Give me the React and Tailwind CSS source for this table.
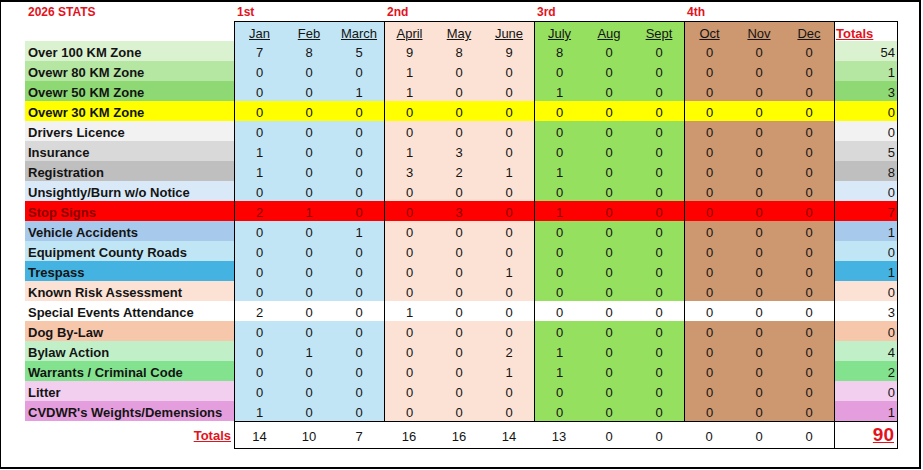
import React from "react";

const Q_BG = ["bg-[#C1E5F5]", "bg-[#FBE2D5]", "bg-[#96E060]", "bg-[#CD976F]"];
const MONTHS = ["Jan", "Feb", "March", "April", "May", "June", "July", "Aug", "Sept", "Oct", "Nov", "Dec"];

const ROWS = [
  { label: "Over 100 KM Zone", v: [7, 8, 5, 9, 8, 9, 8, 0, 0, 0, 0, 0], t: 54, bg: "bg-[#DAF2D0]" },
  { label: "Ovewr 80 KM Zone", v: [0, 0, 0, 1, 0, 0, 0, 0, 0, 0, 0, 0], t: 1, bg: "bg-[#B5E6A2]" },
  { label: "Ovewr 50 KM Zone", v: [0, 0, 1, 1, 0, 0, 1, 0, 0, 0, 0, 0], t: 3, bg: "bg-[#8ED973]" },
  { label: "Ovewr 30 KM Zone", v: [0, 0, 0, 0, 0, 0, 0, 0, 0, 0, 0, 0], t: 0, bg: "bg-[#FFFF00]", all: "bg-[#FFFF00]" },
  { label: "Drivers Licence", v: [0, 0, 0, 0, 0, 0, 0, 0, 0, 0, 0, 0], t: 0, bg: "bg-[#F2F2F2]" },
  { label: "Insurance", v: [1, 0, 0, 1, 3, 0, 0, 0, 0, 0, 0, 0], t: 5, bg: "bg-[#D9D9D9]" },
  { label: "Registration", v: [1, 0, 0, 3, 2, 1, 1, 0, 0, 0, 0, 0], t: 8, bg: "bg-[#BFBFBF]" },
  { label: "Unsightly/Burn w/o Notice", v: [0, 0, 0, 0, 0, 0, 0, 0, 0, 0, 0, 0], t: 0, bg: "bg-[#DAE9F8]" },
  { label: "Stop Signs", v: [2, 1, 0, 0, 3, 0, 1, 0, 0, 0, 0, 0], t: 7, bg: "bg-[#FF0000]", all: "bg-[#FF0000]", red: true },
  { label: "Vehicle Accidents", v: [0, 0, 1, 0, 0, 0, 0, 0, 0, 0, 0, 0], t: 1, bg: "bg-[#A6C9EC]" },
  { label: "Equipment County Roads", v: [0, 0, 0, 0, 0, 0, 0, 0, 0, 0, 0, 0], t: 0, bg: "bg-[#C0E6F5]" },
  { label: "Trespass", v: [0, 0, 0, 0, 0, 1, 0, 0, 0, 0, 0, 0], t: 1, bg: "bg-[#44B3E1]" },
  { label: "Known Risk Assessment", v: [0, 0, 0, 0, 0, 0, 0, 0, 0, 0, 0, 0], t: 0, bg: "bg-[#FBE2D5]" },
  { label: "Special Events Attendance", v: [2, 0, 0, 1, 0, 0, 0, 0, 0, 0, 0, 0], t: 3, bg: "bg-white", all: "bg-white" },
  { label: "Dog By-Law", v: [0, 0, 0, 0, 0, 0, 0, 0, 0, 0, 0, 0], t: 0, bg: "bg-[#F7C7AC]" },
  { label: "Bylaw Action", v: [0, 1, 0, 0, 0, 2, 1, 0, 0, 0, 0, 0], t: 4, bg: "bg-[#C1F0C8]" },
  { label: "Warrants / Criminal Code", v: [0, 0, 0, 0, 0, 1, 1, 0, 0, 0, 0, 0], t: 2, bg: "bg-[#83E28E]" },
  { label: "Litter", v: [0, 0, 0, 0, 0, 0, 0, 0, 0, 0, 0, 0], t: 0, bg: "bg-[#F2CEEF]" },
  { label: "CVDWR's Weights/Demensions", v: [1, 0, 0, 0, 0, 0, 0, 0, 0, 0, 0, 0], t: 1, bg: "bg-[#E59EDD]" },
];

const TOTALS = [14, 10, 7, 16, 16, 14, 13, 0, 0, 0, 0, 0];

function cellBorder(i) {
  return i % 3 === 0 ? "border-l border-black" : "";
}

export default function App() {
  return (
    <div className="w-[923px] h-[470px] bg-white font-['Liberation_Sans',Arial,sans-serif] text-[#141414]">
      <div className="w-[921px] h-[469px] border-t-2 border-r-2 border-b-2 border-l border-black pl-[24px]">
        {/* title row */}
        <div className="flex h-[19px] text-[12px] font-bold text-[#E3121C] leading-[17px] pt-[2px]">
          <div className="w-[209px] pl-[3px]">2026 STATS</div>
          {["1st", "2nd", "3rd", "4th"].map((q) => (
            <div key={q} className="w-[150px] pl-[3px]">{q}</div>
          ))}
        </div>

        {/* header row */}
        <div className="flex h-[20px] text-[13px]">
          <div className="w-[209px]" />
          {MONTHS.map((m, i) => (
            <div
              key={m}
              className={`w-[50px] h-[20px] border-t border-black ${cellBorder(i)} ${Q_BG[Math.floor(i / 3)]} text-center pt-[3px] leading-[17px]`}
            >
              <span className="underline">{m}</span>
            </div>
          ))}
          <div className="w-[64px] h-[20px] border-t border-l border-r border-black bg-white pl-[1px] pt-[3px] leading-[17px] font-bold text-[#E3121C]">
            <span className="underline">Totals</span>
          </div>
        </div>

        {/* data rows */}
        {ROWS.map((r) => (
          <div key={r.label} className={`flex h-[20px] text-[13px] ${r.red ? "text-[#8A0000]" : ""}`}>
            <div className={`w-[209px] h-[20px] ${r.bg} pl-[3px] pt-[3px] leading-[17px] font-bold whitespace-nowrap`}>
              {r.label}
            </div>
            {r.v.map((n, i) => (
              <div
                key={i}
                className={`w-[50px] h-[20px] ${cellBorder(i)} ${r.all ? r.all : Q_BG[Math.floor(i / 3)]} text-center pt-[3px] leading-[17px]`}
              >
                {n}
              </div>
            ))}
            <div className={`w-[64px] h-[20px] border-l border-r border-black ${r.bg} text-right pr-[2px] pt-[3px] leading-[17px]`}>
              {r.t}
            </div>
          </div>
        ))}

        {/* totals row */}
        <div className="flex h-[28px] text-[13px]">
          <div className="w-[209px] h-[28px] text-right pr-[3px] pt-[6px] leading-[17px] font-bold text-[#E3121C]">
            <span className="underline">Totals</span>
          </div>
          {TOTALS.map((n, i) => (
            <div
              key={i}
              className={`w-[50px] h-[28px] border-t border-b border-black ${i === 0 ? "border-l" : ""} bg-white text-center pt-[6px] leading-[17px]`}
            >
              {n}
            </div>
          ))}
          <div className="w-[64px] h-[28px] border border-black bg-white text-right pr-[3px] pt-[2px] leading-[22px] text-[19px] font-bold text-[#E3121C]">
            <span className="underline">90</span>
          </div>
        </div>
      </div>
    </div>
  );
}
